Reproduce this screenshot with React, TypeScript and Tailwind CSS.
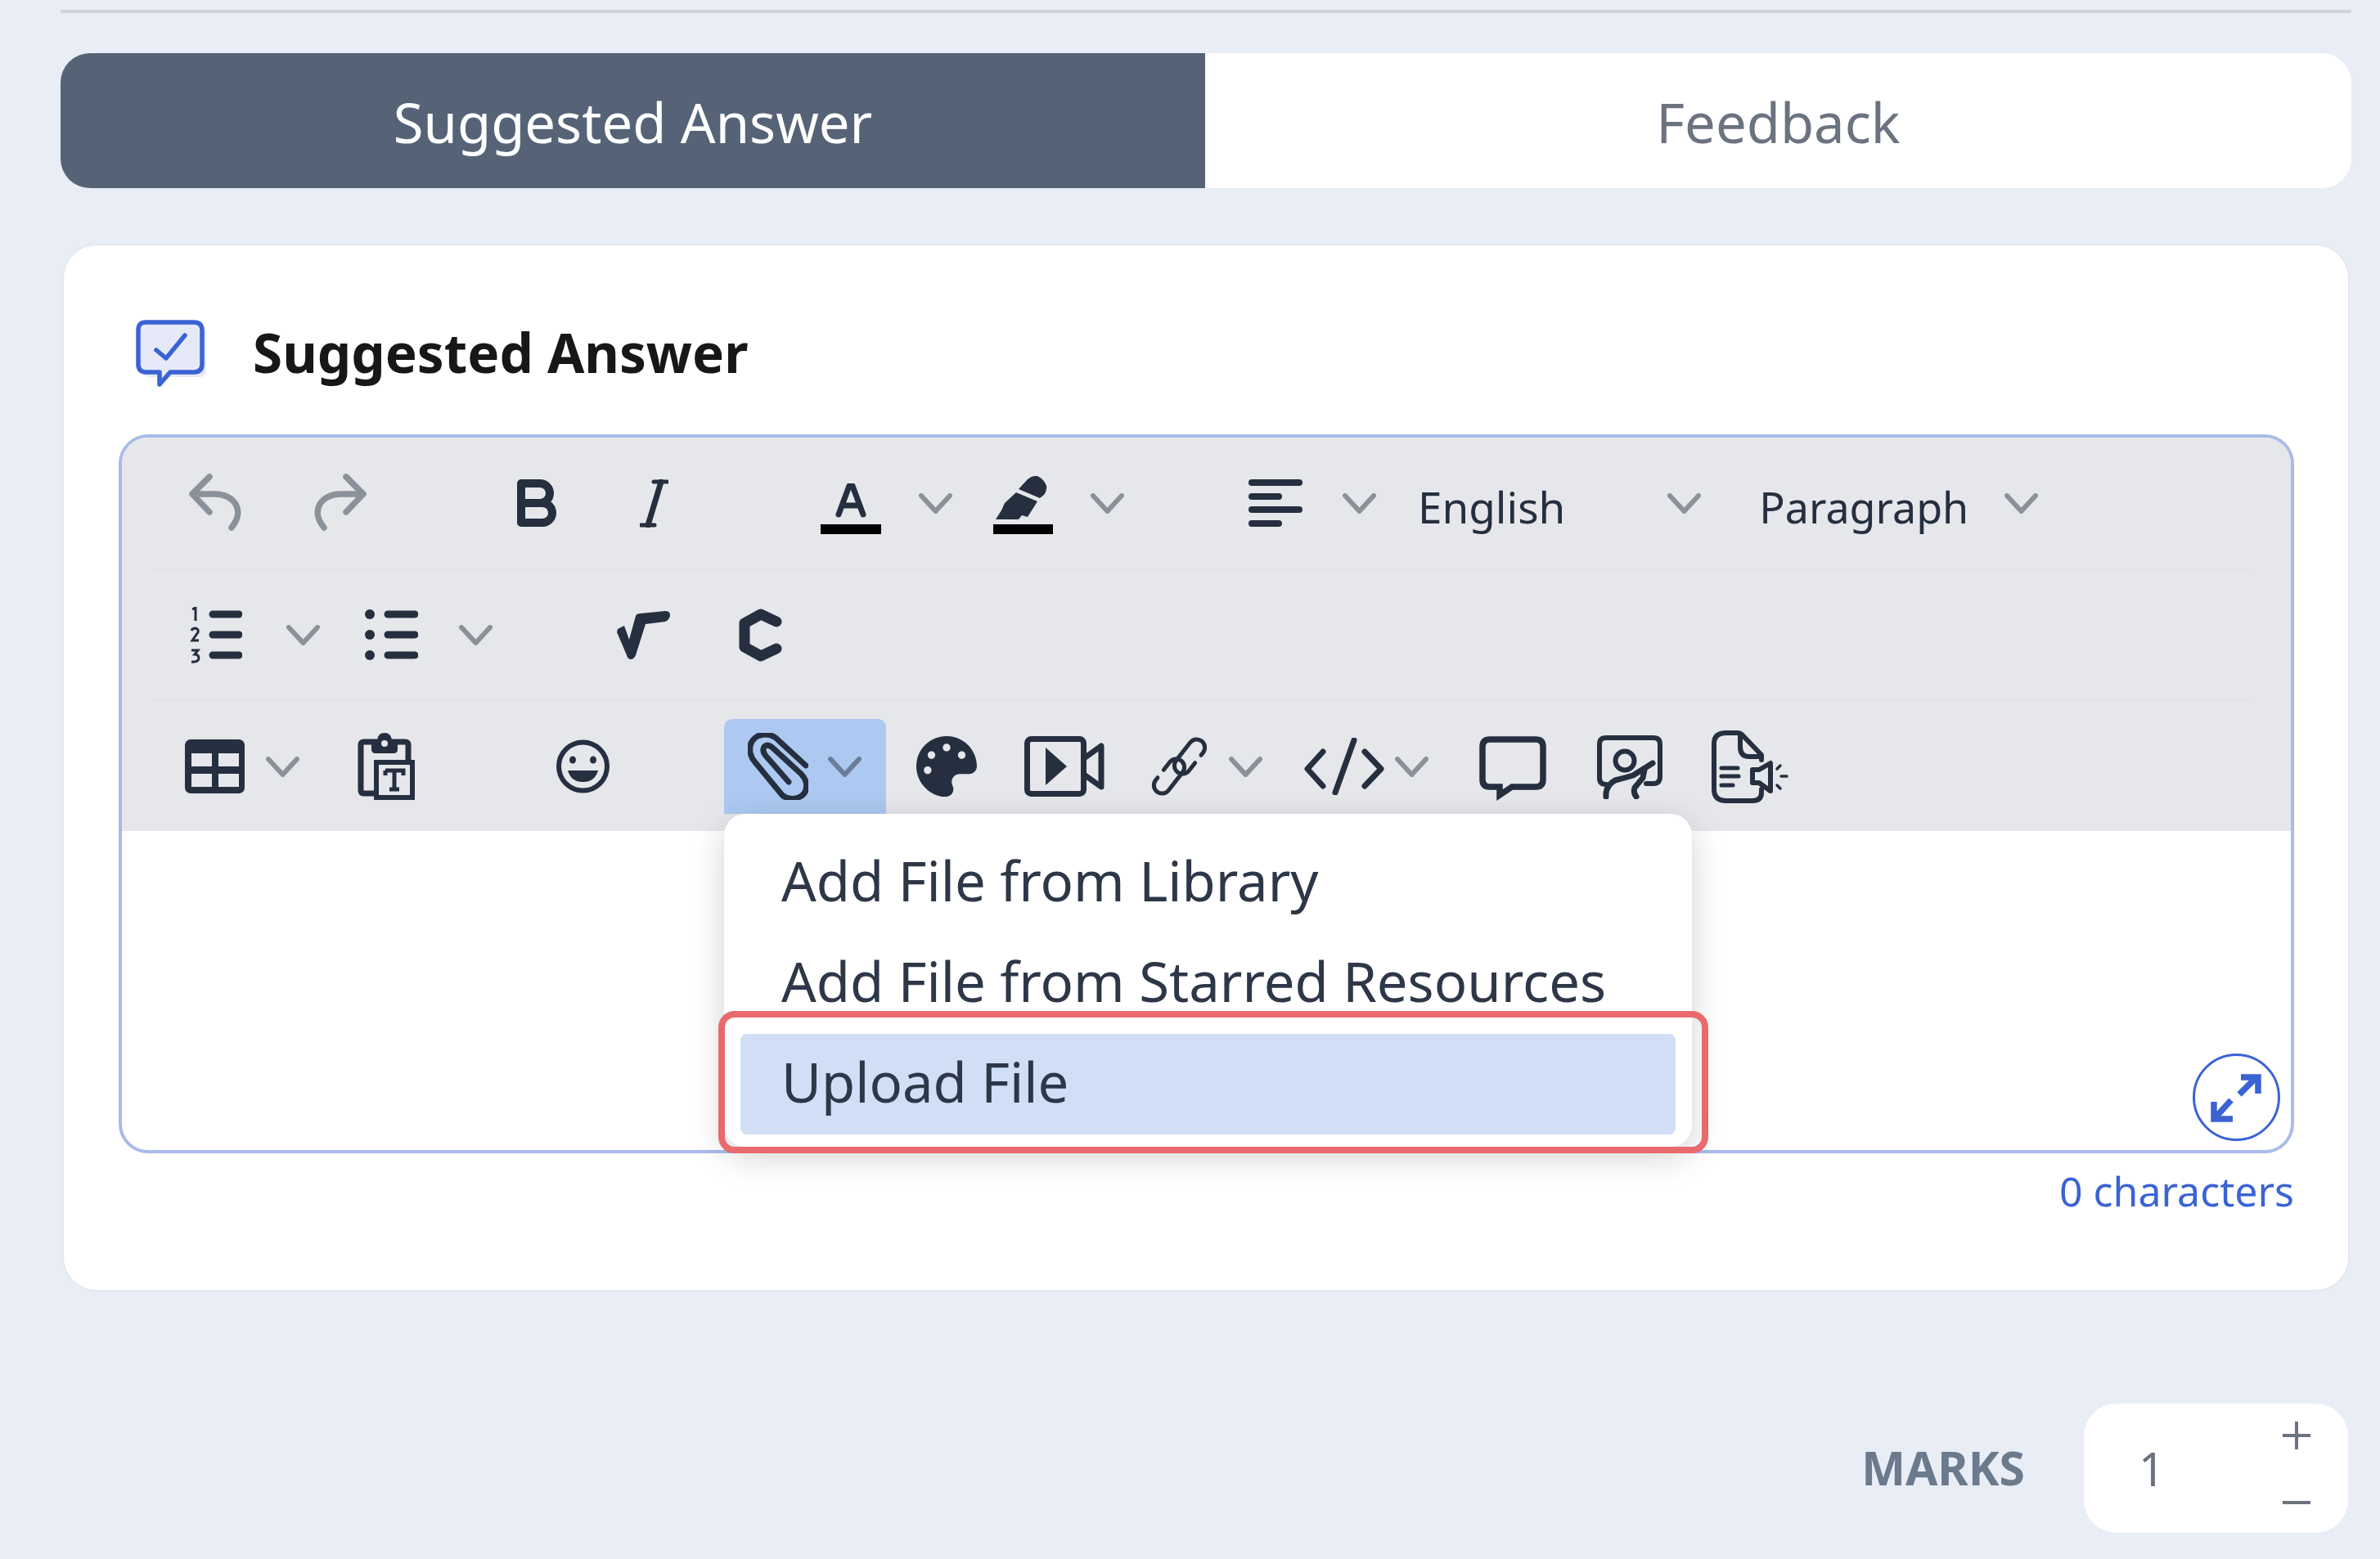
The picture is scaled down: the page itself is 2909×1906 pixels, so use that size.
import { FaPalette } from "react-icons/fa";

const INK = "#252f3f";
const GREY = "#8b9199";

function Chev({ className = "", color = GREY }: { className?: string; color?: string }) {
  return (
    <svg width="41" height="25" viewBox="0 0 41 25" className={`shrink-0 ${className}`} fill="none">
      <path d="M3 3 L20.5 22 L38 3" stroke={color} strokeWidth="6" strokeLinecap="round" strokeLinejoin="round" />
    </svg>
  );
}

function Undo({ className = "", flip = false }: { className?: string; flip?: boolean }) {
  return (
    <svg width="66" height="70" viewBox="0 0 66 70" className={`shrink-0 ${flip ? "-scale-x-100" : ""} ${className}`} fill="none">
      <path d="M25 4 L4 25 L25 47 M6 25 H32 C54 25 70 44 52 66" stroke={GREY} strokeWidth="7.5" strokeLinecap="round" strokeLinejoin="round" />
    </svg>
  );
}

function Bars({ className = "" }: { className?: string }) {
  return (
    <svg width="66" height="58" viewBox="0 0 66 58" className={`shrink-0 ${className}`} fill={INK}>
      <rect x="0" y="0" width="66" height="8" rx="4" />
      <rect x="0" y="17" width="41" height="8" rx="4" />
      <rect x="0" y="33" width="66" height="8" rx="4" />
      <rect x="0" y="50" width="41" height="8" rx="4" />
    </svg>
  );
}

function Row1() {
  return (
    <div className="mx-[37px] mr-[49px] flex h-[163px] items-center border-b-[3px] border-[#e4e4e6]">
      <Undo className="ml-[45px] mt-[-2px]" />
      <Undo flip className="ml-[85px] mt-[-2px]" />
      <svg width="48" height="58" viewBox="0 0 48 58" className="ml-[184px] shrink-0" fill="none">
        <path d="M5 5h23a11.5 11.5 0 0 1 0 24H5zM5 29h26a12 12 0 0 1 0 24H5z" stroke={INK} strokeWidth="10" strokeLinejoin="round" />
      </svg>
      <svg width="35" height="59" viewBox="0 0 35 59" className="ml-[102px] shrink-0" fill="none" stroke={INK} strokeLinecap="round">
        <path d="M26 3 L10 56" strokeWidth="7" />
        <path d="M17 3 H34 M1 56 H18" strokeWidth="5" />
      </svg>
      <svg width="74" height="62" viewBox="0 0 74 62" className="ml-[186px] mt-[14px] shrink-0" fill="none">
        <path d="M22 38 L35 3 H39 L52 38 M27 27 H47" stroke={INK} strokeWidth="7" strokeLinecap="round" strokeLinejoin="round" />
        <rect x="0" y="50" width="74" height="12" fill="#000" />
      </svg>
      <Chev className="ml-[46px]" />
      <svg width="73" height="71" viewBox="0 0 73 71" className="ml-[50px] mt-[4px] shrink-0" fill={INK}>
        <path d="M42 4 Q48 -1 54 0 Q62 4 65 12 Q66 18 62 23 L57 27 L31 16 Z" />
        <path d="M28 20 L54 31 L42 50 L35 48 L31 53 H3 L10 42 L14 33 Z" />
        <rect x="0" y="59" width="73" height="12" fill="#000" />
      </svg>
      <Chev className="ml-[46px]" />
      <Bars className="ml-[152px]" />
      <Chev className="ml-[49px]" />
      <span className="ml-[51px] mt-[9px] text-[53px] leading-none text-[#252f3f]">English</span>
      <Chev className="ml-[125px]" />
      <span className="ml-[71px] mt-[9px] text-[52px] leading-none text-[#252f3f]">Paragraph</span>
      <Chev className="ml-[44px]" />
    </div>
  );
}

function Ol({ className = "" }: { className?: string }) {
  return (
    <svg width="64" height="69" viewBox="0 0 64 69" className={`shrink-0 ${className}`} fill="none" stroke={INK}>
      <path d="M28 9 H60 M28 34 H60 M28 59 H60" strokeWidth="9" strokeLinecap="round" />
      <path d="M3 3 L7 1 V17 M2 29 Q3 26 7 26 Q11 27 10 31 L3 41 H11 M2 53 H10 L6 58 Q11 58 11 63 Q10 68 2 67" strokeWidth="3" />
    </svg>
  );
}

function Ul({ className = "" }: { className?: string }) {
  return (
    <svg width="65" height="69" viewBox="0 0 65 69" className={`shrink-0 ${className}`} fill={INK}>
      <ellipse cx="6" cy="9" rx="6" ry="6" />
      <ellipse cx="6" cy="34" rx="6" ry="6" />
      <ellipse cx="6" cy="59" rx="6" ry="6" />
      <path d="M28 9 H61 M28 34 H61 M28 59 H61" stroke={INK} strokeWidth="9" strokeLinecap="round" />
    </svg>
  );
}

function Row2() {
  return (
    <div className="mx-[37px] mr-[49px] flex h-[160px] items-center border-b-[3px] border-[#e4e4e6]">
      <Ol className="ml-[46px]" />
      <Chev className="ml-[54px]" />
      <Ul className="ml-[55px]" />
      <Chev className="ml-[50px]" />
      <svg width="66" height="59" viewBox="0 0 66 59" className="ml-[151px] shrink-0" fill={INK}>
        <path d="M2 22 L10 18 L16 35 L24 6 Q25 3 30 3 L60 0 Q66 0 66 5 Q66 10 60 13 L36 16 L24 54 Q22 59 18 59 Q14 59 13 54 L1 26 Z" />
      </svg>
      <svg width="53" height="65" viewBox="0 0 53 65" className="ml-[84px] shrink-0" fill="none">
        <path d="M46 16 L27 7 L7 18 V47 L27 58 L46 49" stroke={INK} strokeWidth="13" strokeLinejoin="round" strokeLinecap="round" />
      </svg>
    </div>
  );
}

function Table({ className = "" }: { className?: string }) {
  return (
    <svg width="73" height="66" viewBox="0 0 73 66" className={`shrink-0 ${className}`}>
      <rect width="73" height="66" rx="7" fill={INK} />
      <g fill="#e5e7eb">
        <rect x="8" y="17" width="25" height="16" />
        <rect x="41" y="17" width="25" height="16" />
        <rect x="8" y="42" width="25" height="16" />
        <rect x="41" y="42" width="25" height="16" />
      </g>
    </svg>
  );
}

function Clipboard({ className = "" }: { className?: string }) {
  return (
    <svg width="70" height="82" viewBox="0 0 70 82" className={`shrink-0 ${className}`} fill="none">
      <path d="M20 74 H8 Q4 74 4 70 V15 Q4 11 8 11 H58 Q62 11 62 15 V36" stroke={INK} strokeWidth="7" />
      <path d="M17 9 H24 Q25 0 33 0 Q41 0 42 9 H49 V20 Q49 25 44 25 H22 Q17 25 17 20 Z" fill={INK} />
      <circle cx="33" cy="13" r="4" fill="#e5e7eb" />
      <rect x="23" y="36" width="44" height="43" fill="#e5e7eb" stroke={INK} strokeWidth="6" />
      <path d="M34 46 H56 V52 M34 46 V52 M45 46 V68 M39 69 H51" stroke={INK} strokeWidth="5" />
    </svg>
  );
}

function Smile({ className = "" }: { className?: string }) {
  return (
    <svg width="65" height="66" viewBox="0 0 65 66" className={`shrink-0 ${className}`} fill="none">
      <circle cx="32.5" cy="33" r="29.5" stroke={INK} strokeWidth="6" />
      <ellipse cx="20" cy="25" rx="4" ry="4.5" fill={INK} />
      <ellipse cx="45" cy="25" rx="4" ry="4.5" fill={INK} />
      <path d="M14 38 H51 Q47 52 32.5 52 Q18 52 14 38 Z" fill={INK} />
    </svg>
  );
}

function PaperClip({ className = "" }: { className?: string }) {
  return (
    <svg width="74" height="82" viewBox="0 0 74 82" className={`shrink-0 ${className}`} fill="none">
      <path
        d="M71 40 L34 6 Q24 -1 12 4 Q1 10 3 24 Q4 30 9 36 L42 76 Q50 83 62 79 Q74 74 71 60 Q70 55 65 50 L30 18 Q24 13 20 17 Q17 22 22 28 L50 60"
        stroke={INK}
        strokeWidth="7"
        strokeLinecap="round"
      />
    </svg>
  );
}

function Video({ className = "" }: { className?: string }) {
  return (
    <svg width="98" height="74" viewBox="0 0 98 74" className={`shrink-0 ${className}`} fill="none">
      <rect x="3.5" y="3.5" width="69" height="67" rx="5" stroke={INK} strokeWidth="7" />
      <path d="M26 14 L52 37 L26 60 Z" fill={INK} />
      <path d="M73 27 L94 12 V62 L73 47" stroke={INK} strokeWidth="7" strokeLinejoin="round" />
    </svg>
  );
}

function LinkIcon({ className = "" }: { className?: string }) {
  const d = "M-2 10 H-14 A10 10 0 0 1 -14 -10 H14 A10 10 0 0 1 14 10 H10";
  return (
    <svg width="73" height="74" viewBox="0 0 73 74" className={`shrink-0 ${className}`} fill="none" stroke={INK} strokeWidth="5" strokeLinecap="round">
      <path d={d} transform="translate(49 25) rotate(-52)" />
      <path d={d} transform="translate(24 49) rotate(128)" />
    </svg>
  );
}

function Code({ className = "" }: { className?: string }) {
  return (
    <svg width="98" height="70" viewBox="0 0 98 70" className={`shrink-0 ${className}`} fill="none">
      <path d="M23 17 L4 38 L23 59 M74 17 L94 38 L74 59 M61 3 L38 67" stroke={INK} strokeWidth="7" strokeLinecap="round" strokeLinejoin="round" />
    </svg>
  );
}

function Comment({ className = "" }: { className?: string }) {
  return (
    <svg width="82" height="82" viewBox="0 0 82 82" className={`shrink-0 ${className}`} fill="none">
      <path d="M13 4 H69 Q78 4 78 13 V53 Q78 62 69 62 H40 L25 72 V62 H13 Q4 62 4 53 V13 Q4 4 13 4 Z" stroke={INK} strokeWidth="7.5" />
    </svg>
  );
}

function Board({ className = "" }: { className?: string }) {
  return (
    <svg width="80" height="78" viewBox="0 0 80 78" className={`shrink-0 ${className}`} fill="none" stroke={INK} strokeLinecap="round">
      <path d="M11 60 Q3 60 3 52 V11 Q3 3 11 3 H69 Q77 3 77 11 V50 Q77 59 69 59 H60" strokeWidth="6" />
      <circle cx="34" cy="31" r="11.5" strokeWidth="6" />
      <path d="M11 75 Q10 62 22 55 Q34 52 44 49 L52 44 L68 34 M48 75 Q44 70 46 64 L56 52 L58 42" strokeWidth="7" />
    </svg>
  );
}

function FileSpeak({ className = "" }: { className?: string }) {
  return (
    <svg width="94" height="89" viewBox="0 0 94 89" className={`shrink-0 ${className}`} fill="none" stroke={INK} strokeLinecap="round" strokeLinejoin="round">
      <path d="M61 36 V30 L37 5 Q35 3 31 3 H18 Q3 3 3 16 V72 Q3 86 18 86 H50 Q61 86 61 76 V72" strokeWidth="6" />
      <path d="M35 5 V20 Q35 32 46 32 H60" strokeWidth="6" />
      <path d="M12 46 H32 M12 56 H33 M12 67 H26" strokeWidth="5" />
      <path d="M50 48 H58 L72 40 V74 L58 64 H50 Z" strokeWidth="6" />
      <path d="M80 47 L84 43 M85 56 H92 M80 67 L84 71" strokeWidth="3.5" />
    </svg>
  );
}

function AttachMenu() {
  return (
    <div className="relative ml-[140px] h-[116px] w-[198px] shrink-0">
      <div className="flex h-full items-center rounded-t-[10px] bg-[#adc9f1]">
        <PaperClip className="ml-[29px]" />
        <Chev color="#6b7d99" className="ml-[24px]" />
      </div>
      <div className="absolute left-0 top-full z-10 w-[1183px] rounded-[26px] bg-white pb-[15px] pt-[23px] text-[67px] leading-[117px] text-[#2d3748] shadow-[0_12px_40px_rgba(0,0,0,0.18)]">
        <div className="h-[123px] px-[70px]">Add File from Library</div>
        <div className="h-[123px] px-[70px]">Add File from Starred Resources</div>
        <div className="mx-[20px] h-[123px] rounded-[8px] bg-[#d0dff6] px-[50px]">Upload File</div>
        <div className="absolute bottom-[-8px] left-[-7px] right-[-20px] h-[174px] rounded-[20px] border-[8px] border-[#e86a6c]" />
      </div>
    </div>
  );
}

function Row3() {
  return (
    <div className="mx-[37px] mr-[49px] flex h-[158px] items-center">
      <Table className="ml-[40px]" />
      <Chev className="ml-[26px]" />
      <Clipboard className="ml-[71px]" />
      <Smile className="ml-[173px]" />
      <AttachMenu />
      <FaPalette size={74} color={INK} className="ml-[37px] shrink-0" />
      <Video className="ml-[58px]" />
      <LinkIcon className="ml-[55px]" />
      <Chev className="ml-[24px]" />
      <Code className="ml-[51px]" />
      <Chev className="ml-[13px]" />
      <Comment className="ml-[62px] mt-[8px]" />
      <Board className="ml-[62px] mt-[2px]" />
      <FileSpeak className="ml-[60px]" />
    </div>
  );
}

function TitleIcon() {
  return (
    <svg width="86" height="82" viewBox="0 0 86 82" className="shrink-0" fill="none">
      <rect x="8" y="8" width="78" height="62" rx="8" fill="#e6eaf8" />
      <path d="M12 3 H71 Q81 3 81 13 V54 Q81 64 71 64 H42 L29 79 V64 H12 Q3 64 3 54 V13 Q3 3 12 3 Z" fill="#e6eaf8" stroke="#3b63d4" strokeWidth="5.5" strokeLinejoin="round" />
      <path d="M25 37 L37 47 L60 19" stroke="#3b63d4" strokeWidth="5.5" strokeLinecap="round" strokeLinejoin="round" />
    </svg>
  );
}

function ExpandButton() {
  return (
    <div className="absolute bottom-[11px] right-[13px] h-[107px] w-[107px]">
      <svg width="107" height="107" viewBox="0 0 107 107" fill="none">
        <circle cx="53.5" cy="53.5" r="52" stroke="#3b63d4" strokeWidth="3" />
        <path d="M57 50 L78 29 M59 29 H80 V49 M47 57 L28 78 M26 59 V80 H49" stroke="#3b63d4" strokeWidth="7.5" />
      </svg>
    </div>
  );
}

export default function App() {
  return (
    <div className="h-[1906px] w-[2909px] overflow-hidden bg-[#e9edf6] pl-[74px] pt-[12px] font-['Noto_Sans',sans-serif]">
      <div className="h-[4px] w-[2800px] bg-[#d1d5db]" />

      <div className="mt-[49px] flex h-[165px] w-[2800px] overflow-hidden rounded-[36px] text-[67px]">
        <div className="flex w-[1399px] items-center justify-center bg-[#566377] pt-[3px] text-white">Suggested Answer</div>
        <div className="flex flex-1 items-center justify-center bg-white pt-[3px] text-[#6b7280]">Feedback</div>
      </div>

      <div className="ml-[4px] mt-[70px] h-[1277px] w-[2792px] rounded-[40px] bg-white pl-[67px] pr-[66px] pt-[91px] shadow-[0_0_4px_rgba(0,0,0,0.06)]">
        <div className="ml-[21px] flex items-center">
          <TitleIcon />
          <span className="ml-[57px] mb-[2px] text-[65.6px] font-bold leading-[80px] text-[#171717]">Suggested Answer</span>
        </div>

        <div className="relative mt-[58px] h-[879px] rounded-[36px] border-[4px] border-[#a9bbe8]">
          <div className="rounded-t-[32px] bg-[#e5e7eb]">
            <Row1 />
            <Row2 />
            <Row3 />
          </div>
          <ExpandButton />
        </div>

        <div className="mt-[13px] text-right text-[50px] leading-[66px] text-[#3b63d4]">0 characters</div>
      </div>

      <div className="mt-[139px] flex w-[2796px] items-center justify-end">
        <span className="text-[57px] font-bold text-[#6b7a8c]">MARKS</span>
        <div className="ml-[72px] flex h-[158px] w-[323px] items-center justify-between rounded-[40px] bg-white pl-[67px] pr-[46px]">
          <span className="text-[56px] text-[#6b7280]">1</span>
          <div className="mb-[13px] flex flex-col items-center gap-[62px]">
            <svg width="34" height="34" viewBox="0 0 34 34" stroke="#6b7280" strokeWidth="4">
              <path d="M0 17 H34 M17 0 V34" />
            </svg>
            <svg width="34" height="6" viewBox="0 0 34 6" stroke="#6b7280" strokeWidth="4">
              <path d="M0 3 H34" />
            </svg>
          </div>
        </div>
      </div>
    </div>
  );
}
